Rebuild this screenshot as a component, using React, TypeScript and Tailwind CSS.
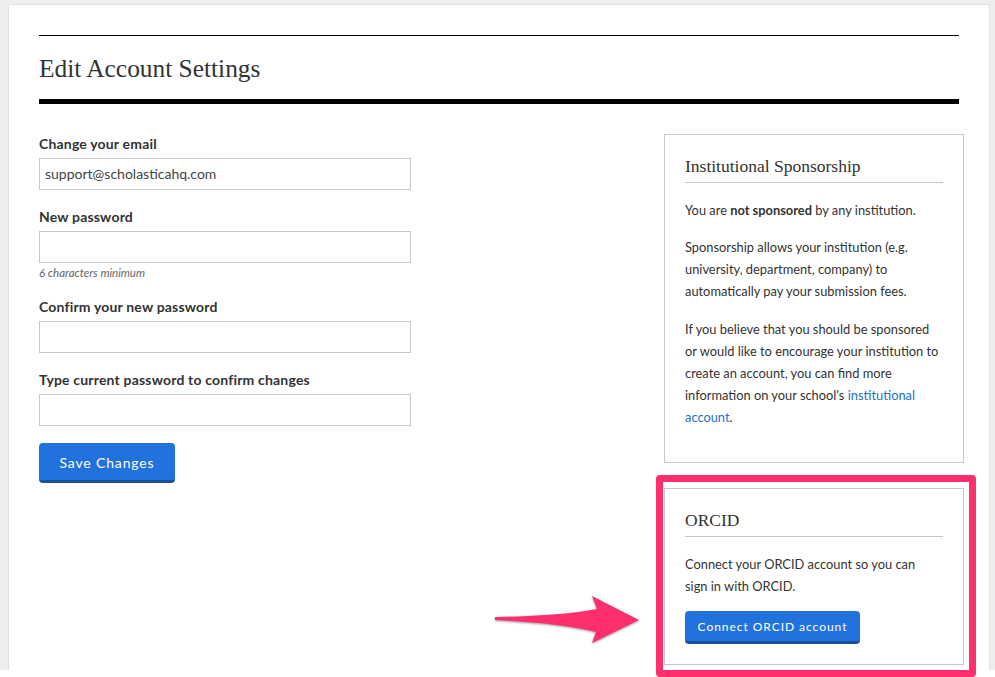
const sans = "font-['Lato','Open_Sans',sans-serif]";

function Field({ label, value, hint, className }: { label: string; value?: string; hint?: string; className?: string }) {
  return (
    <div className={className}>
      <label className="block h-[20px] text-[14px] leading-[18px] font-bold tracking-[0.013em] text-[#333]">{label}</label>
      <input
        readOnly
        value={value ?? ""}
        className="mt-[3px] block h-[32px] w-[372px] border border-[#c8c8c8] bg-white px-[5px] pb-[2px] text-[14px] text-[#444] outline-none"
      />
      {hint && <p className="mt-[3px] text-[11.5px] leading-[14px] italic text-[#666]">{hint}</p>}
    </div>
  );
}

function Button({ children, className }: { children: string; className: string }) {
  return (
    <button className={`block rounded-[4px] border-b-[3px] border-[#1a5299] bg-[#2272de] pt-[2px] text-white ${className}`}>
      {children}
    </button>
  );
}

function Heading({ children }: { children: string }) {
  return (
    <h3 className="h-[28px] border-b border-[#c8c8c8] font-['Liberation_Serif',serif] text-[17.5px] leading-[22px] text-[#333]">
      {children}
    </h3>
  );
}

export default function App() {
  return (
    <div className={`relative h-[677px] w-[995px] overflow-hidden bg-white ${sans}`}>
      <div className="h-[670px] bg-[#eeeeee] pr-[5px] pl-[8px] pt-[4px]">
        <div className="h-[666px] border border-b-0 border-[#e2e2e2] bg-white px-[30px] pt-[30px]">
          <div className="h-[64px] border-t border-black">
            <h1 className="pt-[16px] font-['Liberation_Serif',serif] text-[25.4px] leading-[32px] text-[#333]">Edit Account Settings</h1>
          </div>
          <div className="h-[5px] bg-black" />
          <div className="flex justify-between">
            <div className="pt-[31px]">
              <Field label="Change your email" value="support@scholasticahq.com" />
              <Field className="mt-[18px]" label="New password" hint="6 characters minimum" />
              <Field className="mt-[18px]" label="Confirm your new password" />
              <Field className="mt-[18px]" label="Type current password to confirm changes" />
              <Button className="mt-[17px] h-[40px] w-[136px] text-[14px] tracking-[0.06em]">Save Changes</Button>
            </div>
            <div className="-mr-[5px] w-[300px] pt-[30px] text-[12.85px] leading-[22px] text-[#333]">
              <div className="h-[329px] border border-[#c8c8c8] px-[20px] pt-[20px]">
                <Heading>Institutional Sponsorship</Heading>
                <p className="mt-[16px]">You are <b>not sponsored</b> by any institution.</p>
                <p className="mt-[15px]">Sponsorship allows your institution (e.g. university, department, company) to automatically pay your submission fees.</p>
                <p className="mt-[16px]">
                  If you believe that you should be sponsored or would like to encourage your institution to create an account, you can find more information on your school's{" "}
                  <a className="text-[#2272c4]">institutional account</a>.
                </p>
              </div>
              <div className="mt-[25px] h-[177px] border border-[#c8c8c8] px-[20px] pt-[20px]">
                <Heading>ORCID</Heading>
                <p className="mt-[16px]">Connect your ORCID account so you can<br />sign in with ORCID.</p>
                <Button className="mt-[14px] h-[33px] w-[175px] text-[12px] tracking-[0.08em]">Connect ORCID account</Button>
              </div>
            </div>
          </div>
        </div>
      </div>
      <div className="absolute left-[656px] top-[475px] h-[202px] w-[320px] rounded-[4px] border-[7px] border-[#ff2f6e]" />
      <svg className="absolute left-[490px] top-[590px] drop-shadow-[0_1px_1px_rgba(0,0,0,0.4)]" width="160" height="60" viewBox="0 0 160 60">
        <path d="M5 27 Q70 26 107 19 L102 6 L149 30 L102 53 L106 42 Q70 33 5 30 Z" fill="#ff2f6e" />
      </svg>
    </div>
  );
}
